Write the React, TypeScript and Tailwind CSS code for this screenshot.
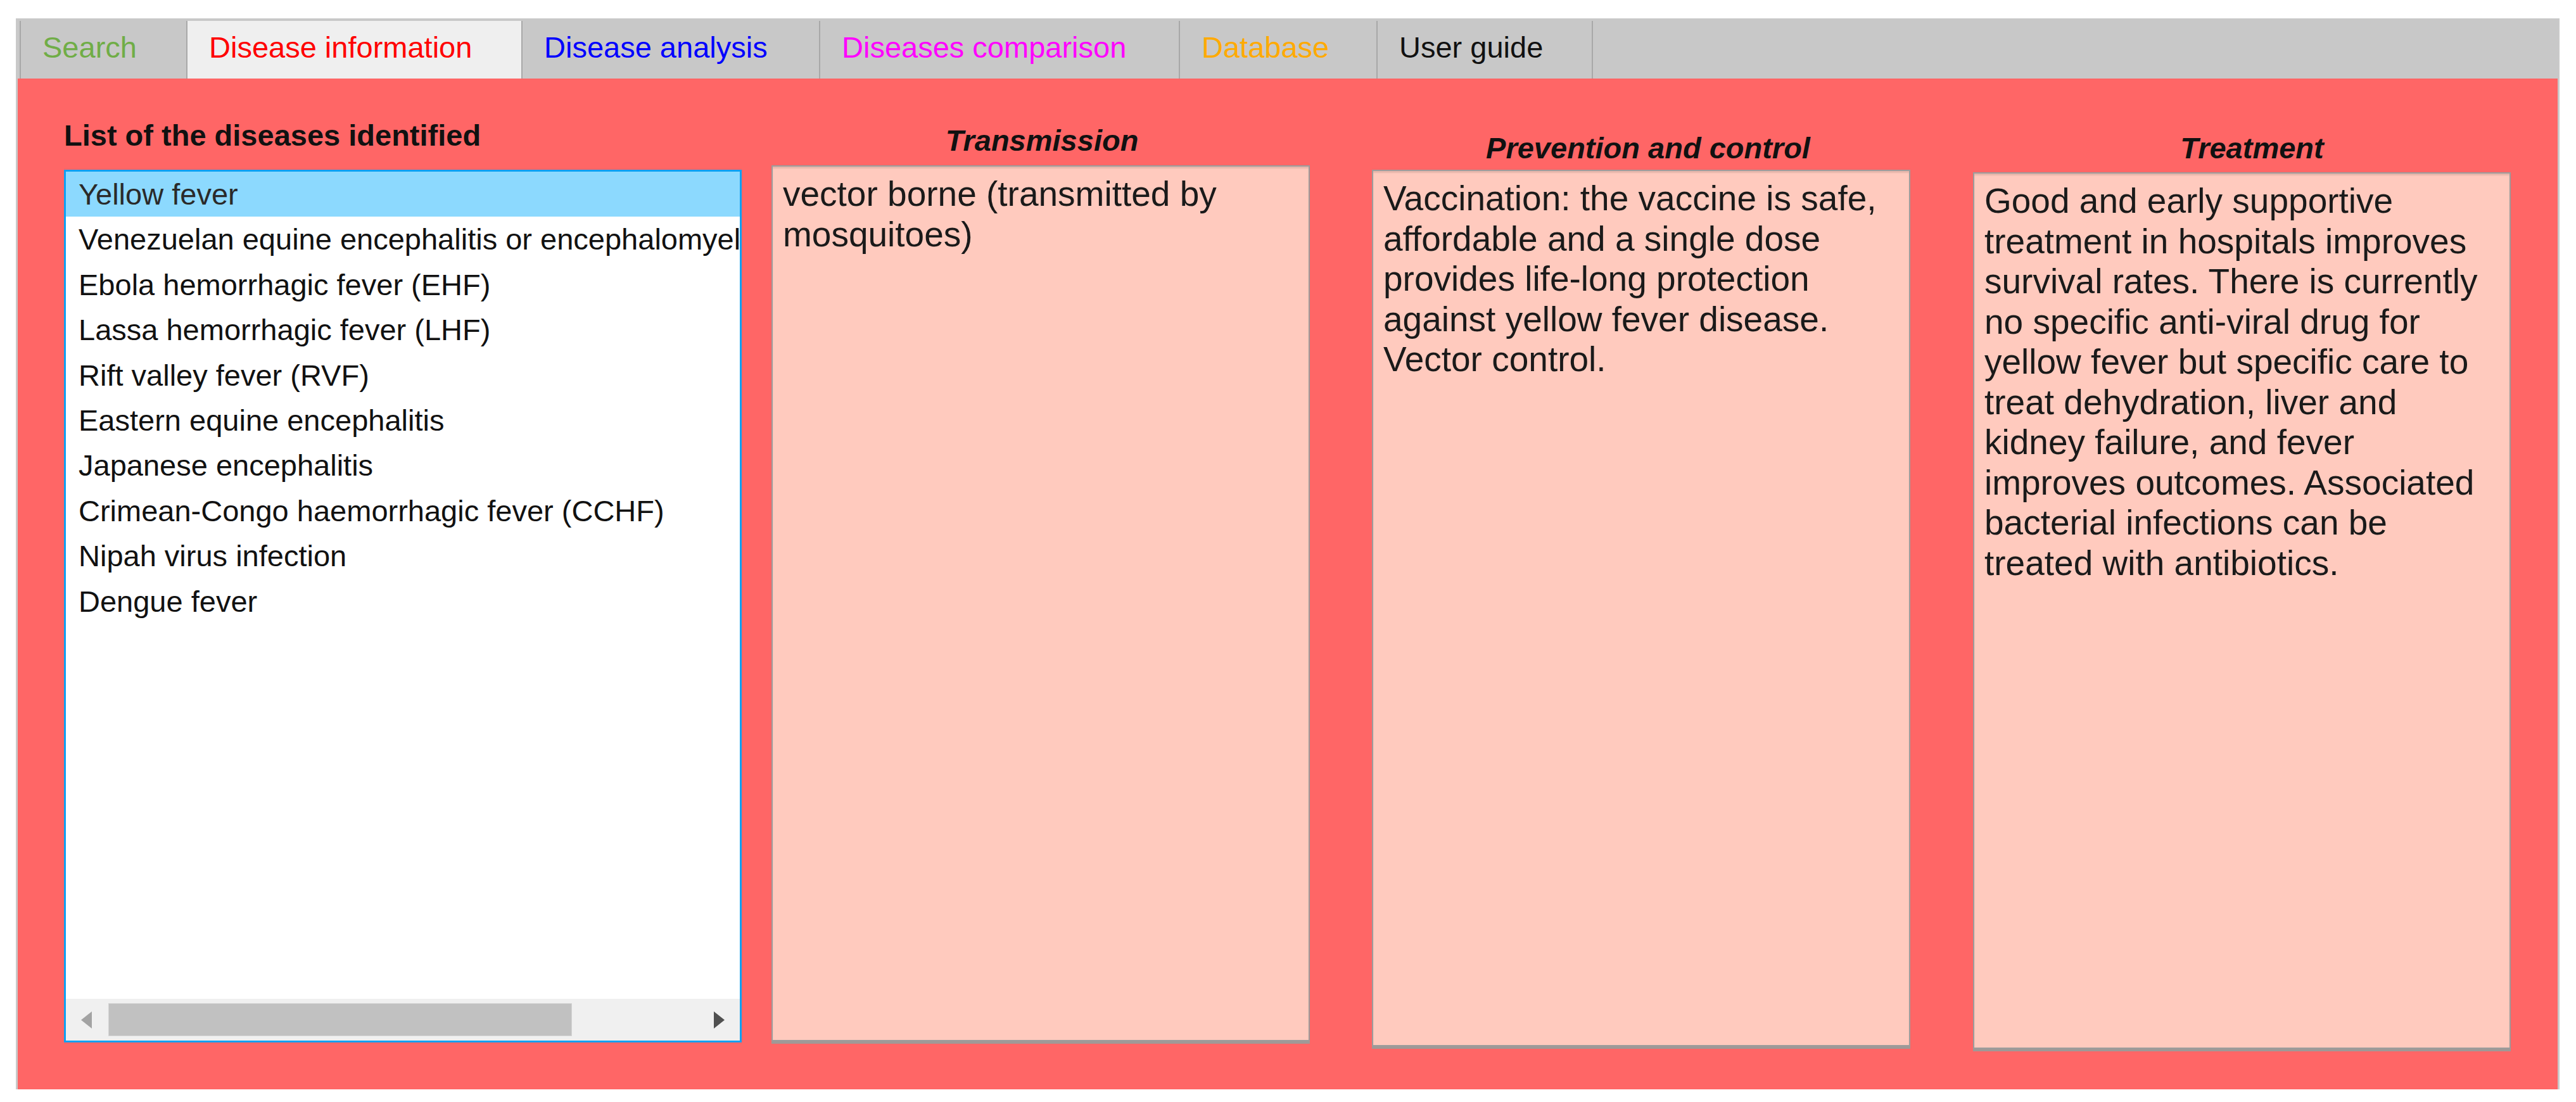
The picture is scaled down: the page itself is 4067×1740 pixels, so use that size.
const tabs = [
  { label: "Search", cls: "w-[263px] text-[#70ad47]" },
  { label: "Disease information", cls: "w-[529px] text-[#ff0000] bg-[#efefef]" },
  { label: "Disease analysis", cls: "w-[470px] text-[#0000ff]" },
  { label: "Diseases comparison", cls: "w-[568px] text-[#ff00ff]" },
  { label: "Database", cls: "w-[312px] text-[#ffaa00]" },
  { label: "User guide", cls: "w-[342px] text-[#111111] border-r-2" },
];

const diseases = [
  "Yellow fever",
  "Venezuelan equine encephalitis or encephalomyelitis",
  "Ebola hemorrhagic fever (EHF)",
  "Lassa hemorrhagic fever (LHF)",
  "Rift valley fever (RVF)",
  "Eastern equine encephalitis",
  "Japanese encephalitis",
  "Crimean-Congo haemorrhagic fever (CCHF)",
  "Nipah virus infection",
  "Dengue fever",
];

function InfoBox({
  title,
  text,
  colCls,
  boxCls,
  titleCls,
}: {
  title: string;
  text: string;
  colCls: string;
  boxCls: string;
  titleCls: string;
}) {
  return (
    <div className={colCls}>
      <div className={"text-center text-[47px] leading-[54px] font-bold italic text-[#111] " + titleCls}>{title}</div>
      <div
        className={
          "border-2 border-[#9c9c9c] bg-[#ffcabe] px-[16px] pt-[12px] text-[55px] leading-[63.5px] text-[#1a1a1a] shadow-[inset_0_3px_2px_rgba(0,0,0,0.10),0_4px_0_#a09896] " +
          boxCls
        }
      >
        {text}
      </div>
    </div>
  );
}

export default function App() {
  return (
    <div className="min-h-screen bg-white" style={{ fontFamily: '"Liberation Sans", Arial, sans-serif' }}>
      <div className="ml-[25px] pt-[29px]">
        <div className="w-[4016px] border-x-[3px] border-[#c9c9c9]">
          {/* Tab bar */}
          <div className="flex h-[95px] items-end bg-[#c8c8c8] pl-[3px]">
            {tabs.map((t) => (
              <div
                key={t.label}
                className={"h-[91px] border-l-2 border-[#a8a8a8] pl-[34px] pt-[15px] text-[47px] leading-[54px] whitespace-nowrap " + t.cls}
              >
                {t.label}
              </div>
            ))}
          </div>

          {/* Red panel */}
          <div className="flex h-[1596px] items-start bg-[#ff6666] pl-[73px]">
            {/* List column */}
            <div className="w-[1070px] pt-[63px]">
              <div className="text-[47px] leading-[54px] font-bold text-[#111]">List of the diseases identified</div>
              <div className="mt-[27px] flex h-[1378px] flex-col border-[3px] border-[#0ea0f2] bg-white">
                <div className="flex-1 overflow-hidden">
                  {diseases.map((d, i) => (
                    <div
                      key={d}
                      className={
                        "h-[71.4px] pl-[20px] text-[47px] leading-[71.4px] whitespace-nowrap " +
                        (i === 0 ? "bg-[#8cd9fe] text-[#2a2a2a]" : "text-[#111]")
                      }
                    >
                      {d}
                    </div>
                  ))}
                </div>
                <div className="flex h-[66px] items-center bg-[#f0f0f0] px-[24px]">
                  <svg width="17" height="27" viewBox="0 0 17 27">
                    <polygon points="17,0 17,27 0,13.5" fill="#a3a3a3" />
                  </svg>
                  <div className="ml-[26px] h-[52px] w-[732px] border border-[#d4d4d4] bg-[#c1c1c1]" />
                  <div className="flex-1" />
                  <svg width="17" height="27" viewBox="0 0 17 27">
                    <polygon points="0,0 0,27 17,13.5" fill="#505050" />
                  </svg>
                </div>
              </div>
            </div>

            <InfoBox
              title="Transmission"
              text="vector borne (transmitted by mosquitoes)"
              colCls="ml-[47px] w-[850px] pt-[71px]"
              boxCls="mt-[12px] h-[1383px]"
              titleCls="pl-[4px]"
            />
            <InfoBox
              title="Prevention and control"
              text="Vaccination: the vaccine is safe, affordable and a single dose provides life-long protection against yellow fever disease. Vector control."
              colCls="ml-[98px] w-[850px] pt-[83px]"
              boxCls="mt-[7px] h-[1384px]"
              titleCls="pl-[22px]"
            />
            <InfoBox
              title="Treatment"
              text="Good and early supportive treatment in hospitals improves survival rates. There is currently no specific anti-viral drug for yellow fever but specific care to treat dehydration, liver and kidney failure, and fever improves outcomes. Associated bacterial infections can be treated with antibiotics."
              colCls="ml-[99px] w-[849px] pt-[83px]"
              boxCls="mt-[11px] h-[1384px]"
              titleCls="pl-[32px]"
            />
          </div>
        </div>
      </div>
    </div>
  );
}
